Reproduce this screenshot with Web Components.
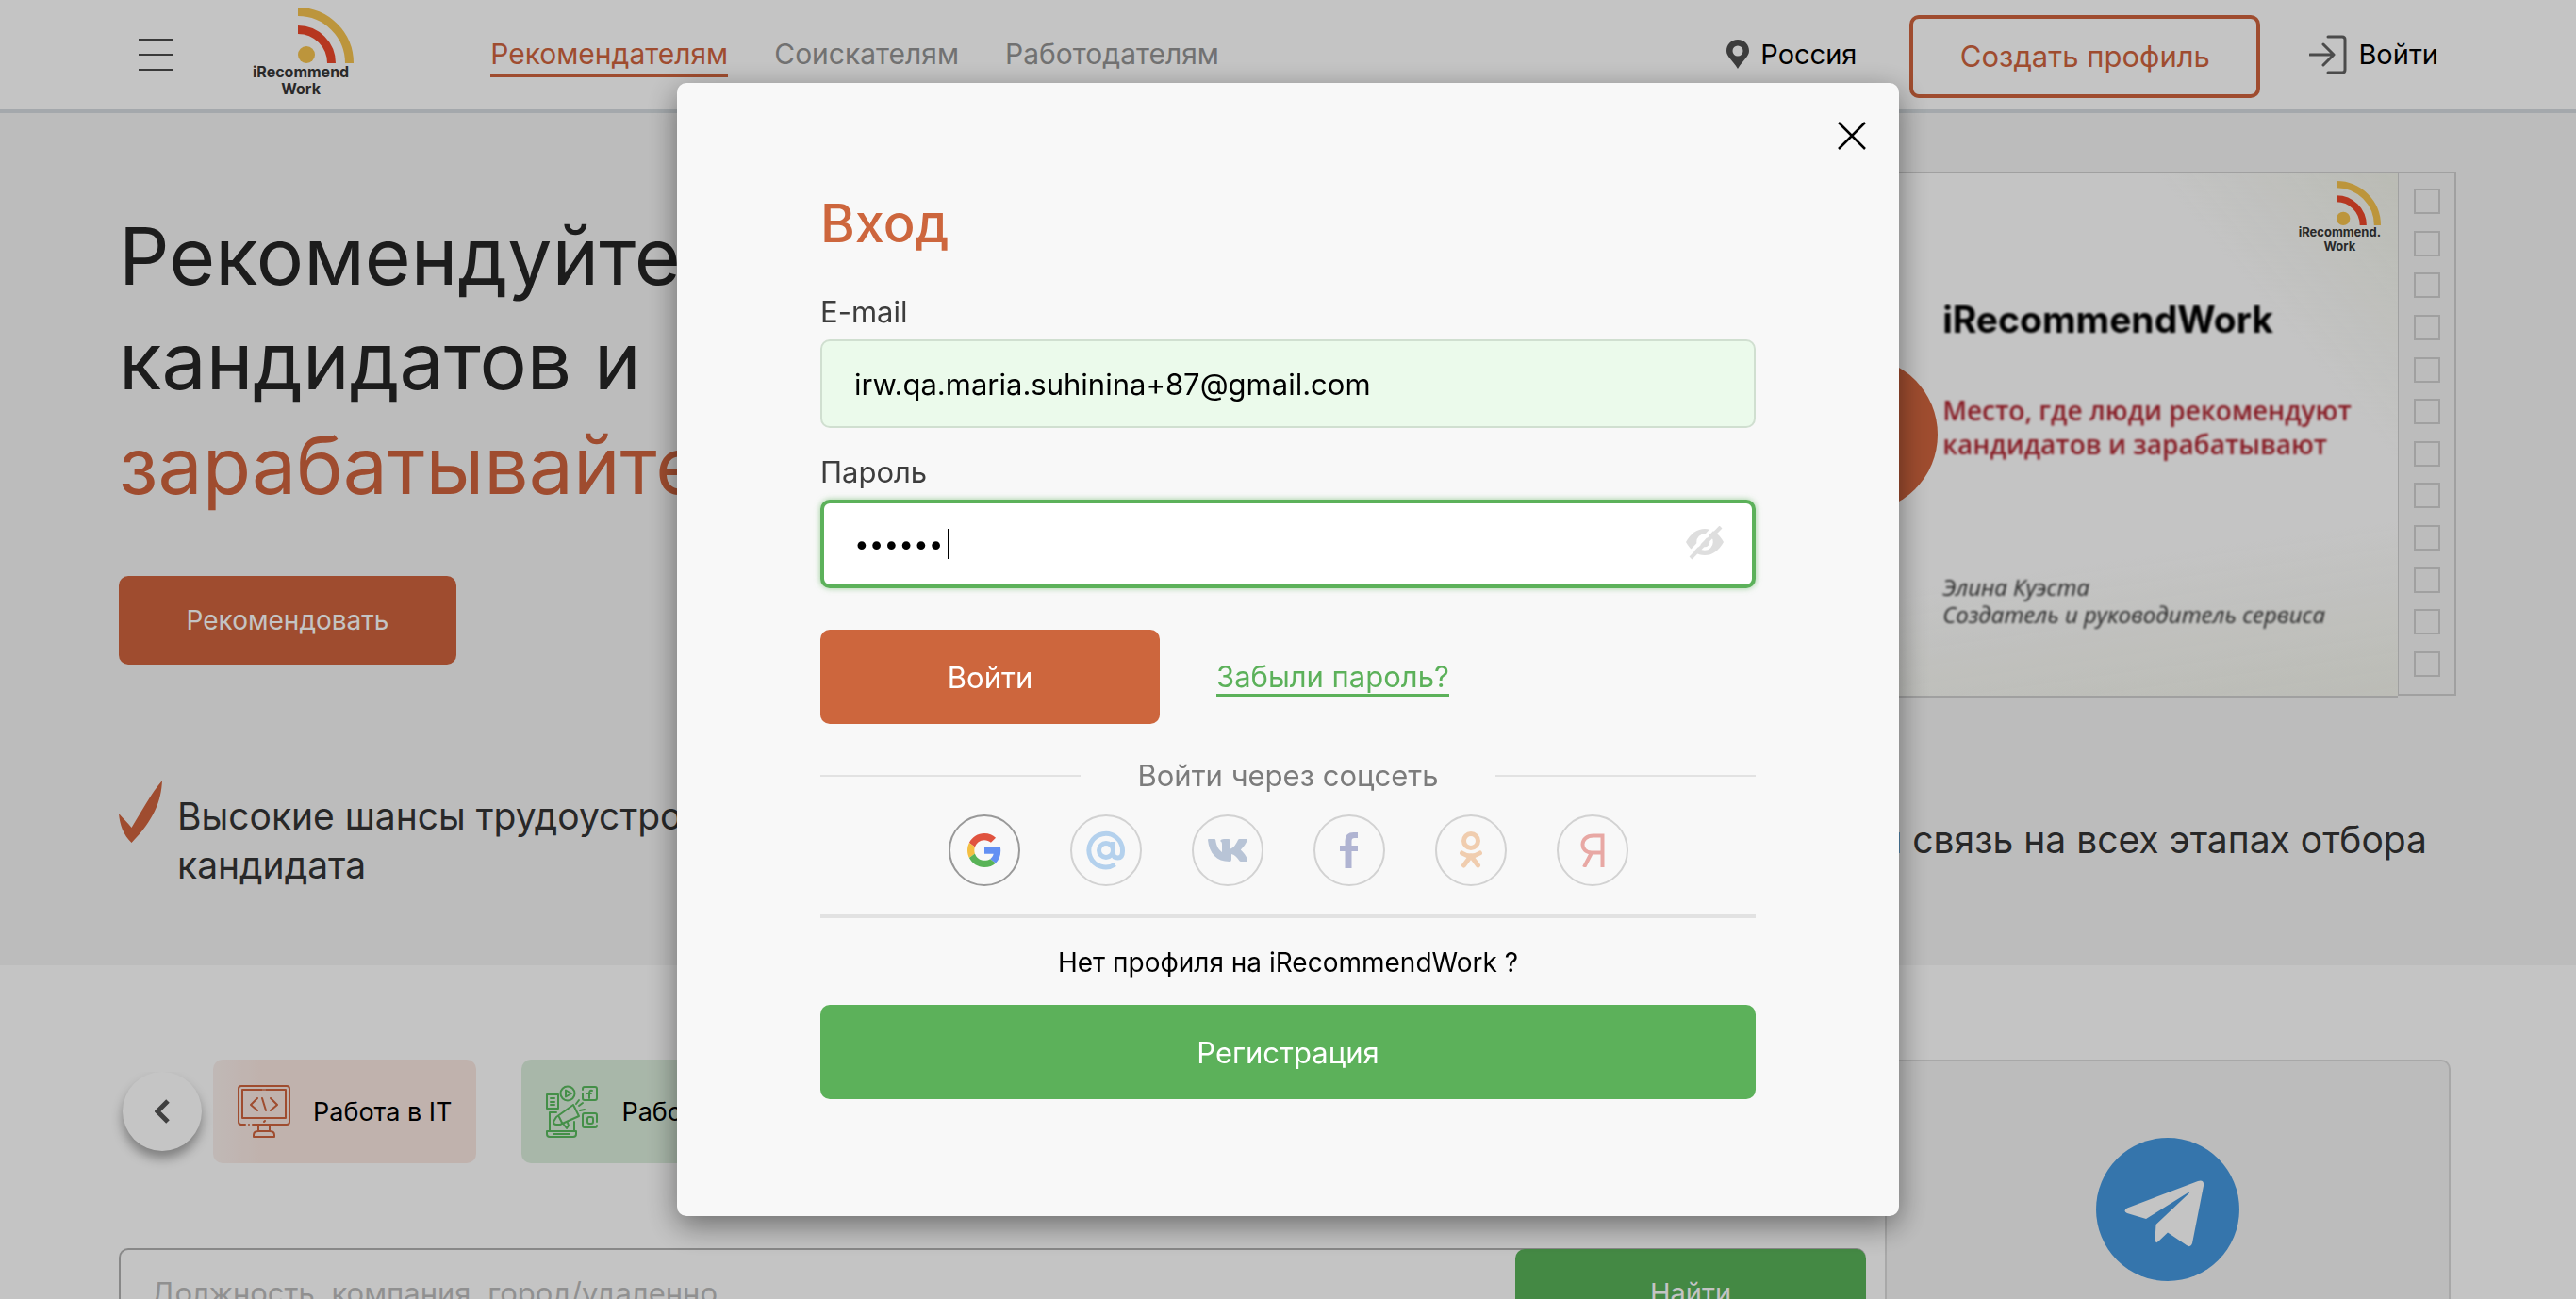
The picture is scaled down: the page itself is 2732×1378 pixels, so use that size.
<!DOCTYPE html>
<html lang="ru">
<head>
<meta charset="utf-8">
<meta name="viewport" content="width=device-width, initial-scale=1">
<title>iRecommendWork</title>
<style>
  html, body { margin: 0; height: 100%; }
  body {
    overflow: hidden;
    background: #f5f5f5;
    color: #000;
    font-family: Inter, "Noto Sans", sans-serif;
    --orange: #c7603b;
    --green: #56ac56;
  }
</style>
</head>
<body>
<site-header></site-header>
<main>
  <hero-section></hero-section>
  <jobs-section></jobs-section>
</main>
<login-modal></login-modal>

<script>
const define = (name, html, setup) => {
  const template = document.createElement('template');
  template.innerHTML = `<style>*{box-sizing:border-box}svg{display:block}a{color:inherit;text-decoration:none}button,input{font:inherit;margin:0}button{border:0;padding:0;background:none;color:inherit}</style>${html}`;
  customElements.define(name, class extends HTMLElement {
    connectedCallback() {
      if (this.shadowRoot) return;
      this.attachShadow({ mode: 'open' }).append(template.content.cloneNode(true));
      if (setup) setup(this, this.shadowRoot);
    }
  });
};

define('brand-logo', `
<style>
  :host { display: block; --mark: 59px; --size: 16px; --line: 18px; }
  a { display: flex; flex-direction: column; }
  svg { width: var(--mark); height: var(--mark); align-self: flex-end; }
  span { color: #343434; font-weight: 700; font-size: var(--size); line-height: var(--line); text-align: center; margin-right: var(--shift, 5px); white-space: nowrap; }
</style>
<a href="#" aria-label="iRecommend Work">
  <svg viewBox="0 0 59 59" aria-hidden="true">
    <path d="M0 4.5A54.5 54.5 0 0 1 54.5 59" fill="none" stroke="#ecbb4b" stroke-width="9"/>
    <path d="M0 23.5A35.5 35.5 0 0 1 35.5 59" fill="none" stroke="#e44528" stroke-width="9"/>
    <circle cx="9" cy="50" r="9" fill="#ecbb4b"/>
  </svg>
  <span><slot></slot></span>
</a>`);

define('nav-link', `
<style>
  :host { display: block; }
  a { display: block; font-size: 30px; line-height: 38px; padding-bottom: 2px; border: solid transparent; border-width: 4px 0; color: #8e8e8e; white-space: nowrap; }
  :host([active]) a { color: var(--orange); border-bottom-color: var(--orange); }
</style>
<a href="#"><slot></slot></a>`);

define('site-header', `
<style>
  :host { display: block; background: #f5f5f5; border-bottom: 4px solid #cdd3d7; }
  header { display: flex; align-items: center; height: 116px; padding: 0 146px; }
  .burger { width: 38px; height: 38px; }
  brand-logo { margin: 8px 0 0 84px; align-self: flex-start; }
  nav { display: flex; gap: 49px; margin-left: 145px; }
  .right { display: flex; align-items: center; margin-left: auto; font-size: 29px; line-height: 38px; }
  .place, .enter { display: flex; align-items: center; gap: 12px; }
  .create { height: 88px; width: 372px; margin: 4px 52px 0 56px; border: 4px solid var(--orange); border-radius: 10px; color: var(--orange); font-size: 31px; white-space: nowrap; }
</style>
<header>
  <button class="burger" aria-label="Меню"><svg width="38" height="38" viewBox="0 0 38 38" stroke="#484848" stroke-width="2"><path d="M1 3h37M1 19h37M1 35h37"/></svg></button>
  <brand-logo>iRecommend<br>Work</brand-logo>
  <nav><nav-link active>Рекомендателям</nav-link><nav-link>Соискателям</nav-link><nav-link>Работодателям</nav-link></nav>
  <div class="right">
    <a class="place" href="#"><svg width="24" height="32" viewBox="0 0 24 32"><path fill="#4b4b4b" fill-rule="evenodd" d="M12 0C5 0 0 5 0 12c0 6 6 9 12 19C18 21 24 18 24 12 24 5 19 0 12 0zm0 6.500a5.500 5.500 0 1 1 0 11 5.500 5.500 0 0 1 0-11z"/></svg>Россия</a>
    <button class="create">Создать профиль</button>
    <a class="enter" href="#"><svg width="40" height="42" viewBox="0 0 40 42" fill="none" stroke="#5e5e5e" stroke-width="3" stroke-linecap="round" stroke-linejoin="round"><path d="M20 2h15q3 0 3 3v32q0 3-3 3H20M1 21h24M15 10l11 11-11 11"/></svg>Войти</a>
  </div>
</header>`);

define('film-slide', `
<style>
  :host { display: flex; position: relative; width: 51%; height: 558px; }
  .strip { width: 62px; height: 556px; border: 2px solid #c8c8c8; border-width: 2px 2px 2px 1px; padding: 16px 15px 18px 16px; display: flex; flex-direction: column; justify-content: space-between; }
  .strip.first { border-width: 2px 1px 2px 2px; }
  .strip i { display: block; height: 27px; border: 2px solid #c8c8c8; }
  .frame { flex: 1; border: solid #c8c8c8; border-width: 2px 0; padding: 8px 0 0 52%; display: flex; flex-direction: column; white-space: nowrap;
    background: linear-gradient(230deg, #e9ebe2 0%, rgba(245,245,245,0) 16%), linear-gradient(352deg, #ebece4 0%, rgba(245,245,245,0) 26%), #f5f5f5; }
  brand-logo { --mark: 47px; --size: 13px; --line: 15px; --shift: 0px; align-self: flex-end; margin-right: 18px; }
  h2 { margin: 46px 0 54px; font-size: 39px; line-height: 48px; font-weight: 700; }
  p { margin: 0 0 119px; color: #a9232e; font: 600 28px/36px "Open Sans", sans-serif; }
  address { color: #303030; font: italic 500 24px/29px "Open Sans", sans-serif; }
  h2, p, address { filter: blur(1px); }
  button { position: absolute; left: 50%; top: 50%; width: 164px; height: 164px; margin: -82px; border-radius: 50%; background: var(--orange); }
  button svg { margin: auto; }
</style>
<div class="strip first"></div>
<div class="frame">
  <brand-logo>iRecommend.<br>Work</brand-logo>
  <h2>iRecommendWork</h2>
  <p>Место, где люди рекомендуют<br>кандидатов и зарабатывают</p>
  <address>Элина Куэста<br>Создатель и руководитель сервиса</address>
</div>
<div class="strip"></div>
<button aria-label="Смотреть видео"><svg width="48" height="56" viewBox="0 0 48 56"><path d="M6 0l42 28L6 56z" fill="#f5f5f5"/></svg></button>`,
(host, root) => root.querySelectorAll('.strip').forEach(s => { s.innerHTML = '<i></i>'.repeat(12); }));

define('feature-item', `
<style>
  :host { display: flex; gap: 16px; font-size: 39px; line-height: 52px; color: #323232; }
  svg { flex: none; margin-top: -12px; }
</style>
<svg width="46" height="66" viewBox="0 0 46 66"><path d="M0 35c5 6 9 9 13.500 15C24 33 34 14 46 0 45 22 37 42 13.500 66 5 58 1 47 0 35z" fill="#c7603b"/></svg>
<span><slot></slot></span>`);

define('hero-section', `
<style>
  :host { display: block; background: #ececec; padding: 62px 127px 80px 126px; }
  .top { display: flex; justify-content: space-between; }
  h1 { margin: 34px 0 62px; font-size: 84px; line-height: 111px; font-weight: 400; color: #232323; }
  h1 span { display: block; }
  h1 .accent { color: var(--orange); }
  button { width: 358px; height: 94px; border-radius: 10px; background: var(--orange); color: #f5f5f5; font-size: 28px; }
  .features { display: flex; align-items: center; justify-content: space-between; margin-top: 100px; padding-right: 31px; }
</style>
<div class="top">
  <div>
    <h1><span>Рекомендуйте</span><span>кандидатов и</span><span class="accent">зарабатывайте</span></h1>
    <button>Рекомендовать</button>
  </div>
  <film-slide></film-slide>
</div>
<div class="features">
  <feature-item>Высокие шансы трудоустройства<br>кандидата</feature-item>
  <feature-item>Обратная связь на всех этапах отбора</feature-item>
</div>`);

define('category-chip', `
<style>
  :host { display: block; --tone: #f0dfd9; --ink: #c7603b; }
  :host([tone="green"]) { --tone: #d3e5d4; --ink: #56b35a; }
  a { display: flex; align-items: center; gap: 24px; height: 110px; padding: 0 26px; border-radius: 10px; background: var(--tone); color: #000; font-size: 27px; white-space: nowrap; }
  :host([faded]) a { background: linear-gradient(90deg, #f1e7e4 0, #f0dfd9 50px); }
  ::slotted(svg) { display: block; width: 56px; height: 56px; fill: none; stroke: var(--ink); stroke-width: 2; stroke-linecap: round; stroke-linejoin: round; }
</style>
<a href="#"><slot name="icon"></slot><slot></slot></a>`);

define('job-search', `
<style>
  :host { display: block; }
  form { display: flex; height: 94px; border: 2px solid #aaa; border-right: 0; border-radius: 10px; }
  input { flex: 1; min-width: 0; border: 0; outline: 0; background: none; padding: 0 32px; font-size: 31px; }
  input::placeholder { color: #b5b5b5; opacity: 1; }
  button { width: 372px; margin: -1px 0; border-radius: 10px; background: var(--green); color: #f5f5f5; font-size: 29px; }
</style>
<form><input type="search" aria-label="Поиск вакансий" placeholder="Должность, компания, город/удаленно"><button type="button">Найти</button></form>`);

define('telegram-card', `
<style>
  :host { display: block; width: 600px; height: 420px; padding-top: 81px; border: 2px solid #d2d2d2; border-radius: 10px; background: #ececec; }
  svg { margin: auto; }
</style>
<a href="#" aria-label="Telegram"><svg width="152" height="152" viewBox="0 0 152 152"><circle cx="76" cy="76" r="76" fill="#4393d7"/>
<path fill="#f5f5f5" d="M33 74.500L108 46q7-2 6 5l-12 61q-1.500 5-6 2L76 100.500 66 110q-3 3-3.500-2L63.500 92 99 58.500q0-1-2 0L53 86 33 80q-5-2.500 0-5.500z"/></svg></a>`);

define('jobs-section', `
<style>
  :host { display: flex; gap: 20px; padding: 100px 133px 0 126px; }
  .main { flex: 1; min-width: 0; }
  .carousel { display: flex; align-items: center; padding-left: 4px; gap: 12px; margin-bottom: 90px; }
  .prev { flex: none; width: 84px; height: 84px; border-radius: 50%; background: #f7f7f7; box-shadow: 0 8px 12px rgba(0,0,0,.35); clip-path: inset(0 -20px -30px -20px); }
  .prev svg { margin: auto; }
  .chips { display: flex; gap: 48px; }
</style>
<div class="main">
  <div class="carousel">
    <button class="prev" aria-label="Назад"><svg width="16" height="26" viewBox="0 0 16 26" fill="none" stroke="#505050" stroke-width="5"><path d="M14 2L3 13l11 11"/></svg></button>
    <div class="chips">
      <category-chip faded>
        <svg slot="icon" viewBox="0 0 56 56"><path d="M26 5H5v30h46V5H30M28 5h0M8 42H4q-3 0-3-3V4q0-3 3-3h48q3 0 3 3v35q0 3-3 3H16M12 42h0M28 39l1-1M22 42v7M34 42v7M17 55v-2q0-4 5-4h12q5 0 5 4v2zM21 14l-7 7 7 6M26 14l4 13M35 14l7 7-7 6"/></svg>
        Работа в IT
      </category-chip>
      <category-chip tone="green">
        <svg slot="icon" viewBox="0 0 56 56"><path d="M1 10h12v15H1zM5 14h4M5 18h4M5 21h4"/><circle cx="23" cy="9" r="7.500"/><path d="M21 5.500v7l6-3.500zM42 2h10q2 0 2 2v10q0 2-2 2H41q-2 0-2-2V9M39 5V4q0-2 2-2M49 6q-3-1-3 3v5M43 9h5M41 30h11q2 0 2 2v7M54 43q0 2-2 2H41q-2 0-2-2V32q0-2 2-2M46 34h2q2 0 2 2v3q0 2-2 2h-2q-2 0-2-2v-3q0-2 2-2zM4 29h7M4 29v20M30 39v10M1 49h31v3q0 3-3 3H4q-3 0-3-3zM29 21l-18 13-3 5q0 3 3 3h4l20-9zM14 34l3 6M19 42l3 4 2-3-1-3M32 20l3-4M35 22l4-3M36 27l5-1M8 52h17"/></svg>
        Работа в маркетинге
      </category-chip>
    </div>
  </div>
  <job-search></job-search>
</div>
<telegram-card></telegram-card>`);

define('text-field', `
<style>
  :host { display: block; font-size: 31px; }
  label { display: block; line-height: 38px; margin-bottom: 10px; color: #3d3d3d; }
  .box { position: relative; display: flex; }
  input { flex: 1; min-width: 0; height: 94px; padding: 0 34px; border: 2px solid #d0dfd0; border-radius: 10px; outline: 0; background: #ebfaeb; color: #000; caret-color: transparent; }
  :host([active]) input { border: 4px solid #5cb15a; padding: 0 32px; background: #fff; box-shadow: 0 0 6px rgba(92,177,90,.6); }
  input[type="password"] { font-size: 28px; }
  .eye, .caret { display: none; position: absolute; }
  :host([active]) .eye { display: block; right: 34px; top: 28px; }
  :host([active]) .caret { display: block; left: 135px; top: 31px; width: 2px; height: 32px; background: #000; }
</style>
<label for="field"></label>
<div class="box"><input id="field"><span class="caret"></span>
<button class="eye" type="button" aria-label="Показать пароль"><svg width="40" height="36" viewBox="0 0 40 36"><path d="M0 17Q8 3 20 3t20 14Q32 31 20 31T0 17z" fill="#dedede"/><circle cx="20" cy="17" r="7" fill="#dedede" stroke="#fff" stroke-width="3.500"/><path d="M17 17q0-3 3-3" fill="none" stroke="#fff" stroke-width="2"/><path d="M3 30L33-2" stroke="#fff" stroke-width="4"/><path d="M5 34L37 1" stroke="#dedede" stroke-width="4"/></svg></button></div>`,
(host, root) => {
  root.querySelector('label').textContent = host.getAttribute('label');
  const input = root.querySelector('input');
  input.type = host.getAttribute('type') || 'text';
  input.value = host.getAttribute('value') || '';
});

define('social-button', `
<style>
  :host { display: block; }
  button { display: grid; place-items: center; width: 76px; height: 76px; border: 2px solid #d2d2d2; border-radius: 50%; }
  :host([enabled]) button { border-color: #999; }
</style>
<button type="button"><slot></slot></button>`,
(host, root) => root.querySelector('button').setAttribute('aria-label', host.getAttribute('name')));

define('login-modal', `
<style>
  :host { position: fixed; inset: 0; display: flex; align-items: center; justify-content: center; background: rgba(0,0,0,.2); font-size: 31px; }
  section { position: relative; width: 1296px; max-width: 100%; padding: 114px 152px 124px; border-radius: 10px; background: #f8f8f8; box-shadow: 0 10px 32px rgba(0,0,0,.45); }
  .close { position: absolute; right: 35px; top: 41px; }
  h2 { margin: 0 0 40px; color: #cd663d; font-size: 56px; line-height: 70px; font-weight: 500; }
  text-field + text-field { margin-top: 28px; }
  .actions { display: flex; align-items: center; gap: 60px; margin: 44px 0 35px; }
  .submit, .register { height: 100px; border-radius: 10px; color: #fff; }
  .submit { width: 360px; background: #cd663d; }
  .forgot { color: #5cb15a; line-height: 36px; border: solid transparent; border-width: 3px 0; border-bottom-color: #5cb15a; }
  .or { display: flex; align-items: center; gap: 60px; line-height: 40px; color: #7c7c7c; }
  .or::before, .or::after { content: ""; flex: 1; height: 2px; background: #e2e2e2; }
  .social { display: flex; justify-content: center; gap: 53px; margin: 21px 0 30px; }
  hr { margin: 0; border: 0; height: 4px; background: #e2e2e2; }
  p { margin: 28px 0 26px; font-size: 28px; line-height: 38px; text-align: center; }
  .register { width: 100%; background: #5cb15a; }
</style>
<section role="dialog" aria-modal="true" aria-labelledby="title">
  <button class="close" aria-label="Закрыть"><svg width="30" height="30" viewBox="0 0 30 30" stroke="#000" stroke-width="2.500"><path d="M1 1l28 28M29 1L1 29"/></svg></button>
  <h2 id="title">Вход</h2>
  <text-field label="E-mail" type="email" value="irw.qa.maria.suhinina+87@gmail.com"></text-field>
  <text-field label="Пароль" type="password" value="secret" active></text-field>
  <div class="actions"><button class="submit">Войти</button><a class="forgot" href="#">Забыли пароль?</a></div>
  <div class="or">Войти через соцсеть</div>
  <div class="social">
    <social-button name="Google" enabled><svg width="36" height="36" viewBox="0 0 48 48"><path fill="#e0533f" d="M24 9.500c3.540 0 6.710 1.220 9.210 3.600l6.850-6.850C35.900 2.380 30.470 0 24 0 14.620 0 6.510 5.380 2.560 13.220l7.980 6.190C12.430 13.720 17.740 9.500 24 9.500z"/><path fill="#6390f3" d="M46.980 24.550c0-1.570-.15-3.090-.38-4.550H24v9.020h12.940c-.58 2.960-2.260 5.480-4.780 7.180l7.730 6c4.510-4.180 7.090-10.360 7.090-17.650z"/><path fill="#f4bf42" d="M10.530 28.590c-.48-1.450-.76-2.990-.76-4.590s.27-3.140.76-4.590l-7.980-6.190C.92 16.460 0 20.120 0 24c0 3.880.92 7.540 2.560 10.780l7.970-6.190z"/><path fill="#59b357" d="M24 48c6.480 0 11.930-2.130 15.890-5.810l-7.730-6c-2.150 1.450-4.920 2.300-8.160 2.300-6.260 0-11.570-4.220-13.470-9.910l-7.980 6.190C6.510 42.620 14.620 48 24 48z"/></svg></social-button>
    <social-button name="Mail.ru"><svg width="42" height="42" viewBox="0 0 42 42" fill="none" stroke="#b4d1ed" stroke-width="5"><circle cx="21" cy="21" r="7.500"/><path d="M28.500 12v12q0 5 5 5t5-7v-1A17.800 17.800 0 1 0 30.500 36"/></svg></social-button>
    <social-button name="ВКонтакте"><svg width="42" height="24" viewBox="0 0 42 24"><path fill="#b8c4d6" d="M23 24C9 24 1.500 15 0 1q0-1 1-1h6q1 0 1.200 1C9 7 11 11 15 14V5q0-2-2-3 1-2 4-2h5q2 0 2 2v8.500C28 9 30 5 32 1q.5-1 1.500-1H41q1 0 .8 1c-1 4-4 7-7 10.500 3 3 6 6 7.200 10.500q.3 2-1.500 2H35q-1 0-1.500-.8C31 20 29 17 25 16v6q0 2-2 2z"/></svg></social-button>
    <social-button name="Facebook"><svg width="22" height="38" viewBox="0 0 22 38"><path fill="#b0b4d2" d="M6.500 38V20H1v-6h5.500V9q0-9 9-9H20v6h-3.500q-3 0-3 3v5h6.500v6h-6.500v18z"/></svg></social-button>
    <social-button name="Одноклассники"><svg width="24" height="40" viewBox="0 0 24 40" fill="none" stroke="#f0cdaf" stroke-width="5" stroke-linecap="round"><circle cx="12" cy="10" r="7.500"/><path d="M2.500 23q9.500 6 19 0M12 26L4.500 36M12 26l7.500 10"/></svg></social-button>
    <social-button name="Яндекс"><svg width="26" height="36" viewBox="0 0 26 36" fill="none" stroke="#e8a8a4" stroke-width="4"><path d="M23.500 36V2.500H14C-1 2.500-1 20.500 12 20.500H23.500M12 20.500L4 36"/></svg></social-button>
  </div>
  <hr>
  <p>Нет профиля на iRecommendWork ?</p>
  <button class="register">Регистрация</button>
</section>`);
</script>
</body>
</html>
